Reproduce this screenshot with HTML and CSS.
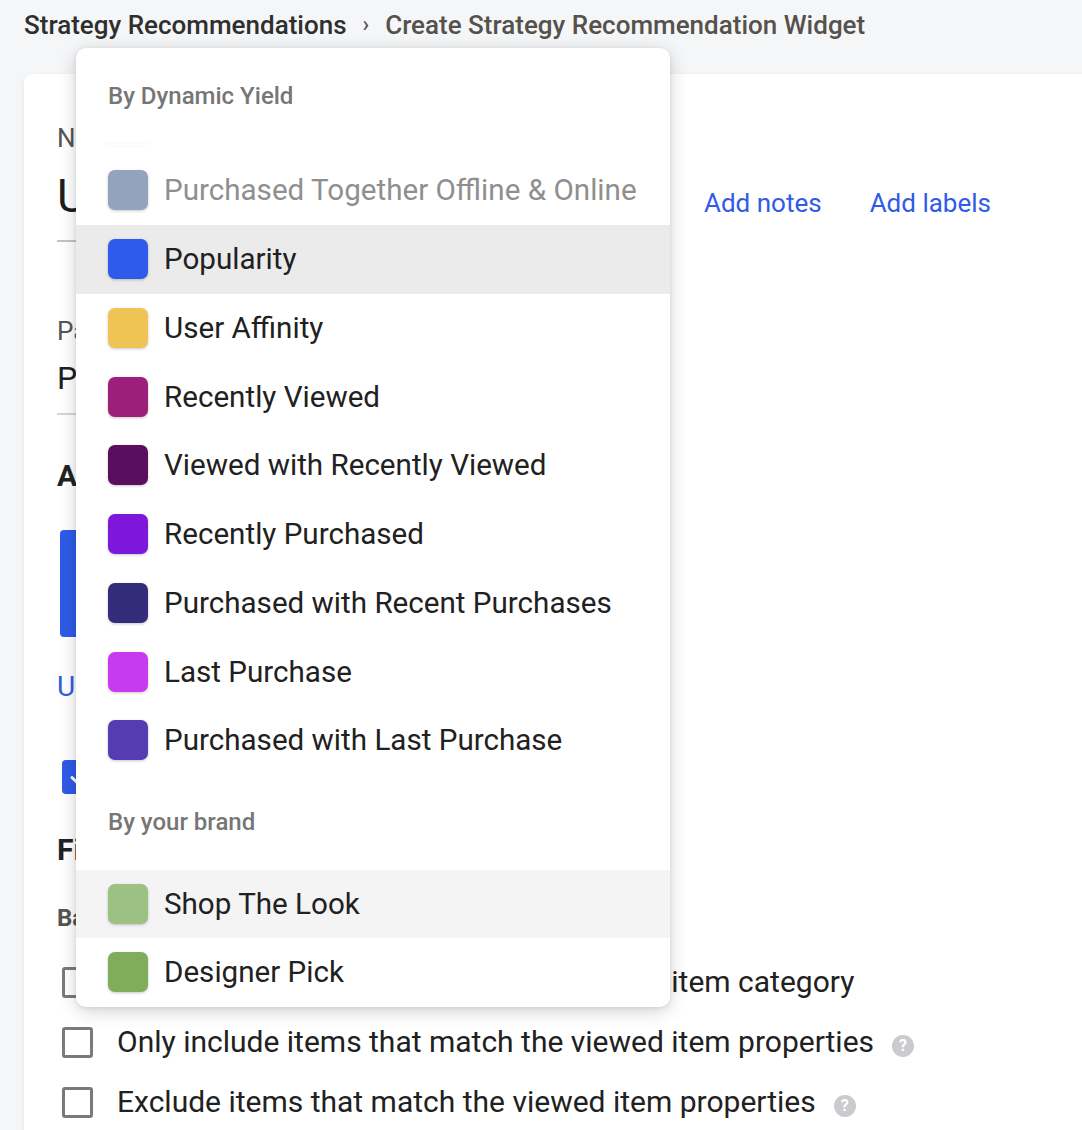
FILE: index.html
```html
<!DOCTYPE html>
<html lang="en">
<head>
<meta charset="utf-8">
<title>Create Strategy Recommendation Widget</title>
<link rel="stylesheet" href="styles.css">
</head>
<body>
<div class="page">
  <nav class="crumbs">
    <span class="crumb-root">Strategy Recommendations</span>
    <span class="crumb-sep">›</span>
    <span class="crumb-current">Create Strategy Recommendation Widget</span>
  </nav>

  <main class="card">
    <div class="field-label">Name</div>
    <div class="name-row">
      <div class="name-input">Untitled Widget</div>
      <a class="link">Add notes</a>
      <a class="link">Add labels</a>
    </div>

    <div class="field-label field-label-2">Page type</div>
    <div class="page-input">Product</div>

    <h2 class="section-title">Algorithm</h2>
    <div class="algo-tile">Popularity</div>
    <a class="link link-block">Use custom strategy</a>

    <div class="check-row check-row-top">
      <span class="checkbox checked">
        <svg viewBox="0 0 24 24" width="24" height="24"><path d="M5 12.5l4.5 4.5L19 7.5" fill="none" stroke="#fff" stroke-width="3" stroke-linecap="round" stroke-linejoin="round"/></svg>
      </span>
      <span class="check-text">Exclude items already purchased</span>
    </div>

    <h2 class="section-title section-title-2">Filters</h2>
    <h3 class="sub-title">Basic</h3>

    <div class="check-list">
      <div class="check-row">
        <span class="checkbox"></span>
        <span class="check-text">Only include items that match the viewed item category</span>
      </div>
      <div class="check-row">
        <span class="checkbox"></span>
        <span class="check-text">Only include items that match the viewed item properties</span>
        <span class="help">?</span>
      </div>
      <div class="check-row">
        <span class="checkbox"></span>
        <span class="check-text">Exclude items that match the viewed item properties</span>
        <span class="help">?</span>
      </div>
    </div>
  </main>

  <div class="dropdown">
    <div class="group-title">By Dynamic Yield</div>
    <div class="scroll-sliver"><span></span></div>
    <div class="option disabled"><span class="swatch" style="background:#94a3bd"></span><span class="opt-text">Purchased Together Offline &amp; Online</span></div>
    <div class="option hover"><span class="swatch" style="background:#2f5bea"></span><span class="opt-text">Popularity</span></div>
    <div class="option"><span class="swatch" style="background:#f0c454"></span><span class="opt-text">User Affinity</span></div>
    <div class="option"><span class="swatch" style="background:#9c207b"></span><span class="opt-text">Recently Viewed</span></div>
    <div class="option"><span class="swatch" style="background:#590e5f"></span><span class="opt-text">Viewed with Recently Viewed</span></div>
    <div class="option"><span class="swatch" style="background:#7e17dc"></span><span class="opt-text">Recently Purchased</span></div>
    <div class="option"><span class="swatch" style="background:#322c7a"></span><span class="opt-text">Purchased with Recent Purchases</span></div>
    <div class="option"><span class="swatch" style="background:#c83aee"></span><span class="opt-text">Last Purchase</span></div>
    <div class="option"><span class="swatch" style="background:#553cb0"></span><span class="opt-text">Purchased with Last Purchase</span></div>
    <div class="group-title group-title-2">By your brand</div>
    <div class="option soft"><span class="swatch" style="background:#9cc183"></span><span class="opt-text">Shop The Look</span></div>
    <div class="option last"><span class="swatch" style="background:#80ad5a"></span><span class="opt-text">Designer Pick</span></div>
  </div>
</div>
</body>
</html>
```

FILE: styles.css
```css
* { box-sizing: border-box; }

html, body {
  margin: 0;
  padding: 0;
  background: #f5f6f8;
  font-family: Roboto, "Liberation Sans", Arial, sans-serif;
  color: #212121;
  overflow: hidden;
}

.page {
  position: relative;
  width: 1082px;
  height: 1130px;
  overflow: hidden;
}

.crumbs {
  display: flex;
  align-items: center;
  gap: 16px;
  padding: 10px 24px 0;
  height: 40px;
  font-size: 26px;
  line-height: 30px;
  font-weight: 500;
}

.crumb-root { color: #2f2f2f; }
.crumb-sep { color: #555; font-size: 22px; }
.crumb-current { color: #55524c; }

.card {
  margin: 34px -40px 0 24px;
  background: #fff;
  border-radius: 8px;
  box-shadow: 0 1px 4px rgba(0, 0, 0, 0.08);
  padding: 49px 33px 60px;
}

.field-label {
  font-size: 26px;
  line-height: 30px;
  color: #555;
}

.name-row {
  display: flex;
  align-items: flex-end;
}

.name-input {
  width: 590px;
  font-size: 46px;
  line-height: 56px;
  padding-top: 15px;
  padding-bottom: 16px;
  border-bottom: 2px solid #c4c4c4;
  color: #1d1d1d;
  white-space: nowrap;
  overflow: hidden;
}

.link {
  color: #2f5be8;
  font-size: 26px;
  line-height: 30px;
  cursor: pointer;
  margin-bottom: 24px;
}

.name-row .link { margin-left: 57px; }
.name-row .link + .link { margin-left: 48px; }

.field-label-2 { margin-top: 74px; }

.page-input {
  width: 590px;
  font-size: 32px;
  line-height: 40px;
  padding: 12px 0 15px;
  border-bottom: 2px solid #d6d6d6;
}

.section-title {
  margin: 43px 0 0;
  font-size: 30px;
  line-height: 36px;
  font-weight: 700;
  color: #222;
}

.algo-tile {
  margin: 36px 0 0 3px;
  width: 260px;
  height: 107px;
  border-radius: 4px;
  background: #2f5be8;
  color: #fff;
  font-size: 24px;
  display: flex;
  align-items: center;
  justify-content: center;
}

.link-block {
  display: block;
  margin: 34px 0 0;
  font-size: 28px;
  line-height: 32px;
}

.check-row {
  display: flex;
  align-items: center;
  height: 60px;
}

.check-row-top {
  margin-top: 42px;
  height: 64px;
}

.checkbox {
  flex: none;
  width: 31px;
  height: 31px;
  margin-left: 5px;
  border: 3px solid #7a7a7a;
  border-radius: 3px;
  display: flex;
  align-items: center;
  justify-content: center;
}

.checkbox.checked {
  width: 34px;
  height: 34px;
  border: none;
  background: #2f5be8;
  border-radius: 4px;
}

.check-text {
  margin-left: 24px;
  font-size: 30px;
  line-height: 34px;
  color: #212121;
  white-space: nowrap;
}

.section-title-2 { margin-top: 23px; }

.sub-title {
  margin: 36px 0 0;
  font-size: 24px;
  line-height: 28px;
  font-weight: 700;
  color: #555;
}

.check-list { margin-top: 20px; }

.help {
  flex: none;
  width: 22px;
  height: 22px;
  margin-left: 18px;
  margin-top: 8px;
  border-radius: 50%;
  background: #cbcbcf;
  color: #fff;
  font-size: 16px;
  font-weight: 700;
  line-height: 22px;
  text-align: center;
}

/* Dropdown overlay */
.dropdown {
  position: absolute;
  left: 76px;
  top: 48px;
  width: 594px;
  background: #fff;
  border-radius: 10px;
  box-shadow: 0 4px 18px rgba(0, 0, 0, 0.18), 0 1px 4px rgba(0, 0, 0, 0.08);
  padding-bottom: 1px;
  overflow: hidden;
}

.group-title {
  height: 96px;
  display: flex;
  align-items: center;
  padding-left: 32px;
  font-size: 24px;
  font-weight: 500;
  color: #767676;
}

.group-title-2 { height: 95px; }

.scroll-sliver {
  height: 12px;
  padding-left: 28px;
}

.scroll-sliver span {
  display: block;
  width: 44px;
  height: 1px;
  background: #fff;
  box-shadow: 0 0 3px rgba(0, 0, 0, 0.1);
}

.option {
  height: 68.75px;
  display: flex;
  align-items: center;
  padding-left: 32px;
}

.option.hover { background: #ebebeb; }
.option.soft { background: #f4f4f4; height: 68px; }
.option.last { height: 68px; }

.swatch {
  flex: none;
  width: 40px;
  height: 40px;
  border-radius: 7px;
  box-shadow: 0 1px 3px rgba(0, 0, 0, 0.22);
}

.opt-text {
  margin-left: 16px;
  font-size: 29.6px;
  line-height: 34px;
  color: #212121;
  white-space: nowrap;
}

.option.disabled .opt-text { color: #8f8f8f; }
```
